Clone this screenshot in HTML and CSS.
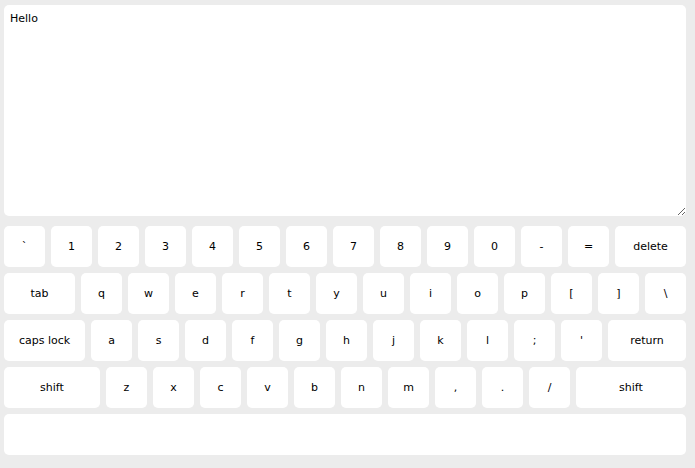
FILE: index.html
```html
<!DOCTYPE html>
<html>
<head>
<meta charset="utf-8">
<link rel="stylesheet" href="styles.css">
</head>
<body>
<div class="app">
  <textarea class="editor">Hello</textarea>
  <div class="keyboard">
    <div class="row">
      <div class="key">`</div><div class="key">1</div><div class="key">2</div><div class="key">3</div><div class="key">4</div><div class="key">5</div><div class="key">6</div><div class="key">7</div><div class="key">8</div><div class="key">9</div><div class="key">0</div><div class="key">-</div><div class="key">=</div><div class="key grow">delete</div>
    </div>
    <div class="row">
      <div class="key tab">tab</div><div class="key">q</div><div class="key">w</div><div class="key">e</div><div class="key">r</div><div class="key">t</div><div class="key">y</div><div class="key">u</div><div class="key">i</div><div class="key">o</div><div class="key">p</div><div class="key">[</div><div class="key">]</div><div class="key grow">\</div>
    </div>
    <div class="row">
      <div class="key caps">caps lock</div><div class="key">a</div><div class="key">s</div><div class="key">d</div><div class="key">f</div><div class="key">g</div><div class="key">h</div><div class="key">j</div><div class="key">k</div><div class="key">l</div><div class="key">;</div><div class="key">'</div><div class="key grow">return</div>
    </div>
    <div class="row">
      <div class="key lshift">shift</div><div class="key">z</div><div class="key">x</div><div class="key">c</div><div class="key">v</div><div class="key">b</div><div class="key">n</div><div class="key">m</div><div class="key">,</div><div class="key">.</div><div class="key">/</div><div class="key grow">shift</div>
    </div>
    <div class="row">
      <div class="key grow"></div>
    </div>
  </div>
</div>
</body>
</html>
```

FILE: styles.css
```css
html, body {
  margin: 0;
  padding: 0;
  background: #ececec;
}
.app {
  width: 682px;
  padding: 5px 0 0 4px;
  font-family: "DejaVu Sans", Verdana, sans-serif;
  font-size: 11px;
  color: #000;
}
.editor {
  display: block;
  box-sizing: border-box;
  width: 682px;
  height: 211px;
  margin: 0 0 10px 0;
  padding: 7px 6px 6px 6px;
  border: none;
  border-radius: 5px;
  background: #fff;
  font-family: "DejaVu Sans", Verdana, sans-serif;
  font-size: 11px;
  line-height: 13px;
  color: #000;
  outline: none;
}
.keyboard {
  display: flex;
  flex-direction: column;
  gap: 6px;
}
.row {
  display: flex;
  gap: 6px;
}
.key {
  width: 41px;
  height: 41px;
  flex: none;
  display: flex;
  align-items: center;
  justify-content: center;
  background: #fff;
  border-radius: 5px;
}
.key.grow { flex: 1; width: auto; }
.key.tab { width: 71px; }
.key.caps { width: 81px; }
.key.lshift { width: 96px; }
```
